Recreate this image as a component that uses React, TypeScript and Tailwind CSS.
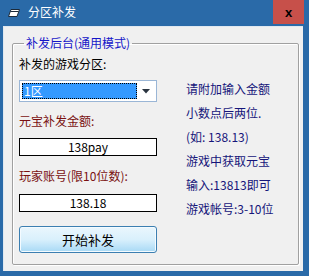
import React from "react";

const font = { fontFamily: '"Noto Sans CJK SC", "Liberation Sans", sans-serif' };

export default function App() {
  return (
    <div
      className="w-[309px] h-[276px] bg-[#2a6aa8] flex flex-col overflow-hidden text-[12px] text-black"
      style={font}
    >
      {/* title bar */}
      <div className="h-[26px] flex items-start shrink-0">
        <div className="flex items-center h-[24px] pl-[8px] flex-1">
          <svg width="12" height="8" viewBox="0 0 12 8" className="mt-[1px]">
            <path d="M3 0.5 L11.5 0.5 L9 7.5 L0.5 7.5 Z" fill="#fff" stroke="#1b2a3a" strokeWidth="1" />
            <path d="M2.5 2.5 L10.5 2.5" stroke="#1b2a3a" strokeWidth="1" />
          </svg>
          <span className="ml-[8px] text-white text-[12px] leading-[16px]">分区补发</span>
        </div>
        <div className="w-[31px] h-[24px] mr-[5px] bg-[#c7504a] flex items-center justify-center">
          <span className="text-[13px] font-bold text-black leading-none" style={{ fontFamily: '"Liberation Sans", sans-serif' }}>
            x
          </span>
        </div>
      </div>

      {/* content */}
      <div className="flex-1 ml-[3px] mr-[6px] mb-[5px] bg-[#f0f0f0] border-l border-t border-[#dfe8f0] pt-[8px]">
        <fieldset className="ml-[8px] w-[287px] h-[230px] border border-[#a0a0a0] rounded-[2px] shadow-[inset_1px_1px_0_#ffffff,1px_1px_0_#ffffff] pl-[6px]">
          <legend className="ml-[5px] px-[2px] text-[12px] leading-[16px] text-[#1515c8]">补发后台(通用模式)</legend>
          <div className="flex">
            {/* left column */}
            <div className="w-[138px] flex flex-col">
              <div className="mt-[5px] leading-[16px]">补发的游戏分区:</div>
              <div className="mt-[8px] h-[22px] border border-[#9ab6d6] bg-white flex items-center px-[2px]">
                <div className="w-[115px] h-[16px] bg-[#3399ff] border border-dotted border-black flex items-center pl-[1px]">
                  <span className="text-white leading-[14px]">1区</span>
                </div>
                <div className="flex-1 flex items-center justify-center">
                  <svg width="8" height="5" viewBox="0 0 8 5">
                    <path d="M0 0 L8 0 L4 4.5 Z" fill="#2a3440" />
                  </svg>
                </div>
              </div>
              <div className="mt-[11px] leading-[16px] text-[#7a1010]">元宝补发金额:</div>
              <div className="mt-[9px] h-[18px] border border-black bg-white flex items-center justify-center leading-[14px]">
                138pay
              </div>
              <div className="mt-[12px] leading-[16px] text-[#7a1010]">玩家账号(限10位数):</div>
              <div className="mt-[10px] h-[18px] border border-black bg-white flex items-center justify-center leading-[14px]">
                138.18
              </div>
              <div className="mt-[14px] h-[27px] rounded-[3px] border border-[#3c7fb1] bg-gradient-to-b from-[#eaf6fd] via-[#d9f0fc] to-[#a7d9f5] shadow-[inset_0_0_0_1px_#f4fbff] flex items-center justify-center text-[13px]">
                开始补发
              </div>
            </div>
            {/* right column */}
            <div className="ml-[29px] mt-[26px] flex flex-col text-[#15157a] leading-[24px]">
              <div>请附加输入金额</div>
              <div>小数点后两位.</div>
              <div>(如: 138.13)</div>
              <div>游戏中获取元宝</div>
              <div>输入:13813即可</div>
              <div>游戏帐号:3-10位</div>
            </div>
          </div>
        </fieldset>
      </div>
    </div>
  );
}
